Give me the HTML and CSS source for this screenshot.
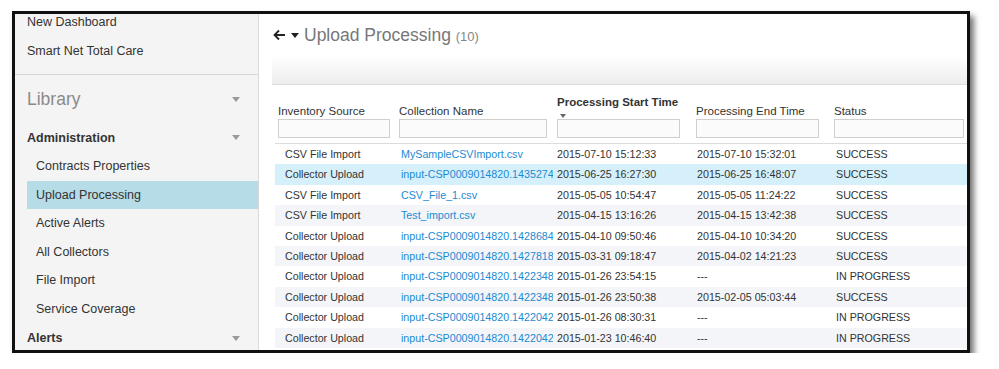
FILE: index.html
```html
<!DOCTYPE html>
<html lang="en">

<head>
    <meta charset="UTF-8">
    <title>Upload Processing</title>
    <link rel="stylesheet" href="styles.css">
</head>

<body>
    <div class="frame">
        <aside class="sidebar">
            <ul class="top-links">
                <li>New Dashboard</li>
                <li>Smart Net Total Care</li>
            </ul>
            <div class="library">Library <span class="caret"></span></div>
            <div class="group">Administration <span class="caret"></span></div>
            <ul class="sub-links">
                <li>Contracts Properties</li>
                <li class="active">Upload Processing</li>
                <li>Active Alerts</li>
                <li>All Collectors</li>
                <li>File Import</li>
                <li>Service Coverage</li>
            </ul>
            <div class="group">Alerts <span class="caret"></span></div>
        </aside>

        <main class="main">
            <div class="title">
                <svg class="back" width="13" height="12" viewBox="0 0 13 12">
                    <path d="M12 6H2M6 1.5L1.5 6 6 10.5" fill="none" stroke="#222" stroke-width="1.8" />
                </svg>
                <span class="title-caret"></span>
                <h1>Upload Processing <span class="count">(10)</span></h1>
            </div>
            <div class="toolbar"></div>

            <div class="grid">
                <div class="head">
                    <div class="hcell"><span>Inventory Source</span><input class="filter w1"></div>
                    <div class="hcell"><span>Collection Name</span><input class="filter w2"></div>
                    <div class="hcell sorted"><span>Processing Start Time</span><span class="sort"></span><input class="filter w3"></div>
                    <div class="hcell"><span>Processing End Time</span><input class="filter w4"></div>
                    <div class="hcell"><span>Status</span><input class="filter w5"></div>
                </div>

                <div class="row">
                    <div>CSV File Import</div><a>MySampleCSVImport.csv</a><div>2015-07-10 15:12:33</div><div>2015-07-10 15:32:01</div><div>SUCCESS</div>
                </div>
                <div class="row selected">
                    <div>Collector Upload</div><a>input-CSP0009014820.1435274854</a><div>2015-06-25 16:27:30</div><div>2015-06-25 16:48:07</div><div>SUCCESS</div>
                </div>
                <div class="row">
                    <div>CSV File Import</div><a>CSV_File_1.csv</a><div>2015-05-05 10:54:47</div><div>2015-05-05 11:24:22</div><div>SUCCESS</div>
                </div>
                <div class="row">
                    <div>CSV File Import</div><a>Test_import.csv</a><div>2015-04-15 13:16:26</div><div>2015-04-15 13:42:38</div><div>SUCCESS</div>
                </div>
                <div class="row">
                    <div>Collector Upload</div><a>input-CSP0009014820.1428684046</a><div>2015-04-10 09:50:46</div><div>2015-04-10 10:34:20</div><div>SUCCESS</div>
                </div>
                <div class="row">
                    <div>Collector Upload</div><a>input-CSP0009014820.1427818727</a><div>2015-03-31 09:18:47</div><div>2015-04-02 14:21:23</div><div>SUCCESS</div>
                </div>
                <div class="row">
                    <div>Collector Upload</div><a>input-CSP0009014820.1422348855</a><div>2015-01-26 23:54:15</div><div>---</div><div>IN PROGRESS</div>
                </div>
                <div class="row">
                    <div>Collector Upload</div><a>input-CSP0009014820.1422348638</a><div>2015-01-26 23:50:38</div><div>2015-02-05 05:03:44</div><div>SUCCESS</div>
                </div>
                <div class="row">
                    <div>Collector Upload</div><a>input-CSP0009014820.1422042231</a><div>2015-01-26 08:30:31</div><div>---</div><div>IN PROGRESS</div>
                </div>
                <div class="row">
                    <div>Collector Upload</div><a>input-CSP0009014820.1422042200</a><div>2015-01-23 10:46:40</div><div>---</div><div>IN PROGRESS</div>
                </div>
            </div>
        </main>
    </div>
</body>

</html>
```

FILE: styles.css
```css
* {
    margin: 0;
    padding: 0;
    box-sizing: border-box;
}

body {
    background: #fff;
    font-family: 'Liberation Sans', Arial, sans-serif;
    color: #333;
}

ul {
    list-style: none;
}

.frame {
    display: flex;
    width: 958px;
    height: 342px;
    margin: 11px 0 0 12px;
    border: 3px solid #111;
    overflow: hidden;
    box-shadow: 4px 5px 6px rgba(0, 0, 0, 0.55);
    background: #fff;
}

/* sidebar */

.sidebar {
    width: 244px;
    flex-shrink: 0;
    background: #f4f4f4;
    border-right: 1px solid #d9d9d9;
    overflow: hidden;
    font-size: 12.5px;
}

.top-links {
    margin-top: -6px;
    padding-bottom: 8px;
    border-bottom: 1px solid #d6d6d6;
}

.top-links li {
    line-height: 29px;
    padding-left: 12px;
}

.library {
    display: flex;
    justify-content: space-between;
    align-items: center;
    height: 48px;
    padding: 0 18px 0 12px;
    font-size: 17.5px;
    color: #8a8a8a;
}

.group {
    display: flex;
    justify-content: space-between;
    align-items: center;
    height: 29px;
    padding: 0 18px 0 12px;
    font-weight: bold;
}

.caret {
    width: 0;
    height: 0;
    border-left: 4px solid transparent;
    border-right: 4px solid transparent;
    border-top: 5px solid #9a9a9a;
}

.sub-links {
    margin-left: 12px;
}

.sub-links li {
    height: 28.6px;
    line-height: 28.6px;
    padding-left: 9px;
}

.sub-links li.active {
    background: #b6dce7;
}

/* main */

.main {
    flex: 1;
    padding-left: 13px;
    min-width: 0;
}

.title {
    display: flex;
    align-items: center;
    height: 42px;
    padding-left: 1px;
}

.back {
    margin-right: 5px;
}

.title-caret {
    width: 0;
    height: 0;
    border-left: 4px solid transparent;
    border-right: 4px solid transparent;
    border-top: 5px solid #222;
    margin-right: 5px;
}

.title h1 {
    font-size: 17.5px;
    font-weight: normal;
    color: #777;
}

.title .count {
    font-size: 13px;
    color: #888;
}

.toolbar {
    height: 29px;
    background: linear-gradient(#ffffff, #ededed);
    border-bottom: 1px solid #dcdcdc;
}

.grid {
    margin-left: 3px;
    font-size: 10.7px;
}

.head,
.row {
    display: grid;
    grid-template-columns: 121px 158px 139px 138px 1fr;
}

.head {
    height: 59px;
    border-bottom: 1px solid #dcdcdc;
    font-size: 11.5px;
}

.hcell {
    display: flex;
    flex-direction: column;
    justify-content: flex-end;
    padding: 0 0 5px 3px;
    line-height: 14px;
}

.hcell span {
    margin-bottom: 1px;
}

.hcell.sorted span:first-child {
    font-weight: bold;
    margin-bottom: 0;
    white-space: nowrap;
}

.sort {
    display: block;
    width: 0;
    height: 0;
    margin: 5px 0 6px 3px;
    border-left: 3px solid transparent;
    border-right: 3px solid transparent;
    border-top: 4px solid #666;
}

.filter {
    height: 19px;
    border: 1px solid #cfcfcf;
    background: #fbfbfb;
}

.w1 { width: 112px; }
.w2 { width: 148px; }
.w3 { width: 123px; }
.w4 { width: 123px; }
.w5 { width: 130px; }

.row {
    height: 20.4px;
    line-height: 20.4px;
    white-space: nowrap;
}

.row:nth-child(odd) {
    background: #f3f5f8;
}

.row.selected {
    background: #d5f0fa;
}

.row > * {
    overflow: hidden;
    padding-left: 3px;
}

.row > :nth-child(1) { padding-left: 10px; }
.row > :nth-child(2) { padding-left: 5px; margin-right: 1px; }
.row > :nth-child(4) { padding-left: 4px; }
.row > :nth-child(5) { padding-left: 5px; }

.row a {
    color: #1a8bd2;
}
```
